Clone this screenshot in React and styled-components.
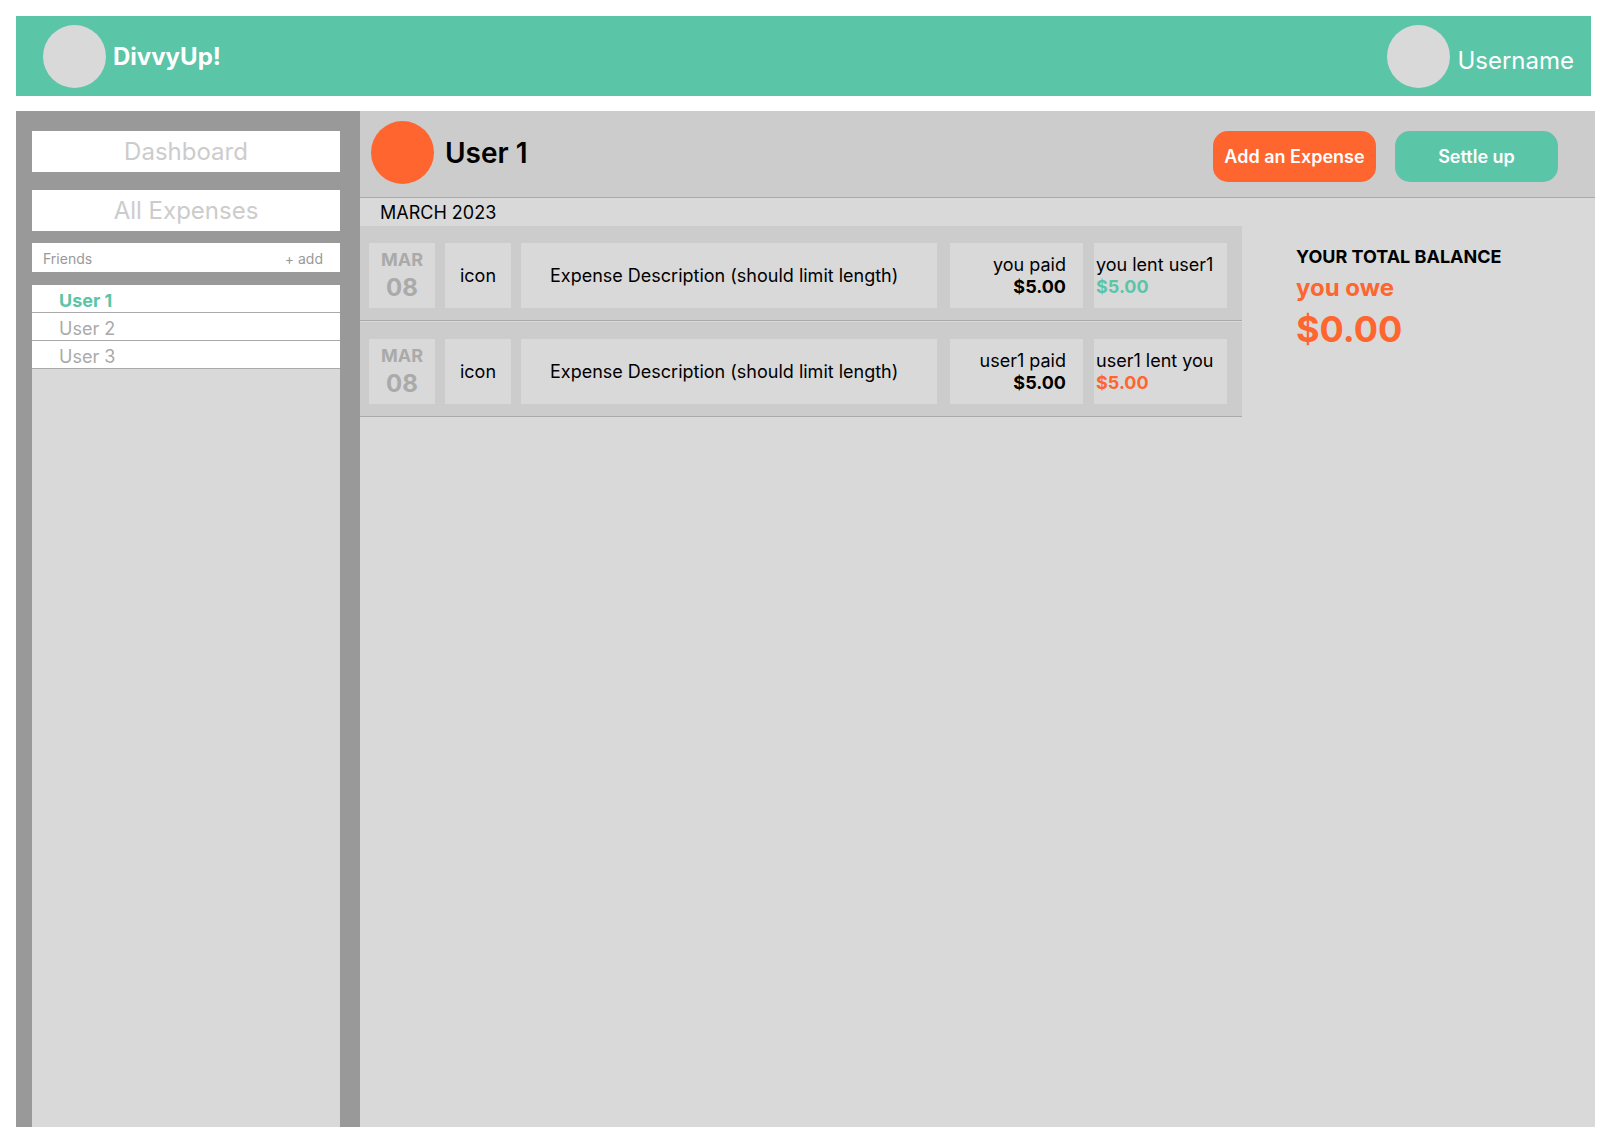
import React from "react";
import styled, { createGlobalStyle, ThemeProvider } from "styled-components";

const theme = {
  green: "#5bc5a7",
  orange: "#ff652f",
  panel: "#d9d9d9",
  band: "#cccccc",
  rail: "#999999",
  muted: "#aaaaaa",
};

const GlobalStyle = createGlobalStyle`
  *, *::before, *::after { box-sizing: border-box; }
  body {
    margin: 0;
    background: #fff;
    color: #000;
    font-family: Inter, "Liberation Sans", sans-serif;
    font-size: 18px;
    line-height: 22px;
  }
  h1, h2, p, ul { margin: 0; padding: 0; }
  ul { list-style: none; }
  a { color: inherit; text-decoration: none; }
  button { border: 0; padding: 0; font: inherit; cursor: pointer; }
`;

const Page = styled.div`
  display: flex;
  flex-direction: column;
  gap: 15px;
  min-height: 100vh;
  padding: 16px 17px 15px 16px;
`;

const Header = styled.header`
  display: flex;
  align-items: center;
  justify-content: space-between;
  height: 80px;
  margin-right: 4px;
  padding: 0 17px 0 27px;
  background: ${({ theme }) => theme.green};
  color: #fff;
`;

const Identity = styled.div`
  display: flex;
  align-items: center;
  gap: ${({ $gap }) => $gap}px;
`;

const Avatar = styled.span`
  flex: none;
  width: 63px;
  height: 63px;
  border-radius: 50%;
  background: ${({ theme, $color }) => theme[$color]};
`;

const Brand = styled.span`
  font-size: 24px;
  line-height: 29px;
  font-weight: 700;
`;

const AccountLink = styled.a`
  padding-top: 8px;
  font-size: 24px;
  line-height: 29px;
  font-weight: 400;
`;

const Body = styled.div`
  display: flex;
  flex: 1;
`;

const Sidebar = styled.aside`
  display: flex;
  flex-direction: column;
  gap: 12px;
  flex: none;
  width: 344px;
  padding: 20px 20px 0 16px;
  background: ${({ theme }) => theme.rail};
`;

const Nav = styled.nav`
  display: flex;
  flex-direction: column;
  gap: 18px;
`;

const NavLink = styled.a`
  display: flex;
  align-items: center;
  justify-content: center;
  height: 41px;
  background: #fff;
  color: ${({ theme }) => theme.band};
  font-size: 24px;
  line-height: 29px;
  font-weight: 400;
`;

const FriendsBar = styled.div`
  display: flex;
  align-items: center;
  justify-content: space-between;
  height: 29px;
  padding: 2px 17px 0 11px;
  background: #fff;
  color: ${({ theme }) => theme.rail};
`;

const FriendsTitle = styled.h2`
  font-size: 14px;
  line-height: 17px;
  font-weight: 400;
`;

const AddFriend = styled.button`
  background: none;
  color: inherit;
  font-size: 14px;
  line-height: 17px;
  font-weight: 400;
`;

const FriendList = styled.ul`
  flex: 1;
  margin-top: 1px;
  background: ${({ theme }) => theme.panel};
`;

const Friend = styled.li`
  height: 28px;
  padding: 5px 27px 0;
  border-bottom: 1px solid ${({ theme }) => theme.muted};
  background: #fff;
  color: ${({ theme, $active }) => ($active ? theme.green : theme.muted)};
  font-weight: ${({ $active }) => ($active ? 700 : 400)};
`;

const Main = styled.main`
  flex: 1;
  min-width: 0;
  background: ${({ theme }) => theme.panel};
`;

const TitleBar = styled.div`
  display: flex;
  align-items: center;
  justify-content: space-between;
  height: 87px;
  padding: 0 37px 4px 11px;
  border-bottom: 1px solid ${({ theme }) => theme.muted};
  background: ${({ theme }) => theme.band};
`;

const Title = styled.h1`
  padding-top: 2px;
  font-size: 28px;
  line-height: 34px;
  font-weight: 600;
`;

const Actions = styled.div`
  display: flex;
  gap: 19px;
  padding-top: 8px;
`;

const ActionButton = styled.button`
  width: 163px;
  height: 51px;
  padding-top: 2px;
  border-radius: 15px;
  background: ${({ theme, $color }) => theme[$color]};
  color: #fff;
  font-weight: 600;
`;

const Columns = styled.div`
  display: flex;
`;

const Ledger = styled.section`
  flex: 1;
  min-width: 0;
`;

const Month = styled.h2`
  padding: 4px 20px 2px;
  font-size: 18px;
  line-height: 22px;
  font-weight: 400;
`;

const ExpenseList = styled.ul`
  display: flex;
  flex-direction: column;
  gap: 1px;
`;

const ExpenseRow = styled.li`
  display: flex;
  gap: 13px;
  padding: 17px 15px 12px 9px;
  border-bottom: 1px solid ${({ theme }) => theme.muted};
  background: ${({ theme }) => theme.band};
`;

const Details = styled.div`
  display: flex;
  flex: 1;
  gap: 10px;
  min-width: 0;
`;

const Amounts = styled.div`
  display: flex;
  gap: 11px;
`;

const Cell = styled.div`
  display: flex;
  flex-direction: column;
  justify-content: center;
  height: 65px;
  background: ${({ theme }) => theme.panel};
`;

const SquareCell = styled(Cell)`
  align-items: center;
  gap: 2px;
  width: 66px;
`;

const DateCell = styled(SquareCell)`
  color: ${({ theme }) => theme.muted};
  font-weight: 700;
`;

const Day = styled.span`
  font-size: 24px;
  line-height: 29px;
`;

const DescriptionCell = styled(Cell)`
  flex: 1;
  min-width: 0;
  padding: 0 20px 0 29px;
`;

const Description = styled.p`
  overflow: hidden;
  text-overflow: ellipsis;
  white-space: nowrap;
`;

const PaidCell = styled(Cell)`
  align-items: flex-end;
  width: 133px;
  padding-right: 17px;
`;

const LentCell = styled(Cell)`
  align-items: flex-start;
  width: 133px;
  padding-left: 2px;
  white-space: nowrap;
`;

const Amount = styled.strong`
  color: ${({ theme, $color }) => ($color ? theme[$color] : "inherit")};
  font-weight: 700;
`;

const Balance = styled.aside`
  display: flex;
  flex-direction: column;
  flex: none;
  gap: 5px;
  width: 353px;
  padding: 48px 54px 0;
  font-weight: 700;
`;

const BalanceTitle = styled.h2`
  font-size: 18px;
  line-height: 22px;
  font-weight: 700;
`;

const BalanceLabel = styled.p`
  color: ${({ theme }) => theme.orange};
  font-size: 24px;
  line-height: 29px;
`;

const BalanceTotal = styled.p`
  color: ${({ theme }) => theme.orange};
  font-size: 36px;
  line-height: 44px;
`;

const friends = ["User 1", "User 2", "User 3"];

const expenses = [
  { id: 1, paid: "you paid", lent: "you lent user1", color: "green" },
  { id: 2, paid: "user1 paid", lent: "user1 lent you", color: "orange" },
];

function Expense({ paid, lent, color }) {
  return (
    <ExpenseRow>
      <Details>
        <DateCell>
          <span>MAR</span>
          <Day>08</Day>
        </DateCell>
        <SquareCell>icon</SquareCell>
        <DescriptionCell>
          <Description>Expense Description (should limit length)</Description>
        </DescriptionCell>
      </Details>
      <Amounts>
        <PaidCell>
          <span>{paid}</span>
          <Amount>$5.00</Amount>
        </PaidCell>
        <LentCell>
          <span>{lent}</span>
          <Amount $color={color}>$5.00</Amount>
        </LentCell>
      </Amounts>
    </ExpenseRow>
  );
}

export default function App() {
  return (
    <ThemeProvider theme={theme}>
      <GlobalStyle />
      <Page>
        <Header>
          <Identity $gap={7}>
            <Avatar $color="panel" />
            <Brand>DivvyUp!</Brand>
          </Identity>
          <Identity $gap={7}>
            <Avatar $color="panel" />
            <AccountLink href="#account">Username</AccountLink>
          </Identity>
        </Header>
        <Body>
          <Sidebar>
            <Nav>
              <NavLink href="#dashboard">Dashboard</NavLink>
              <NavLink href="#expenses">All Expenses</NavLink>
            </Nav>
            <FriendsBar>
              <FriendsTitle>Friends</FriendsTitle>
              <AddFriend type="button">+ add</AddFriend>
            </FriendsBar>
            <FriendList>
              {friends.map((name, i) => (
                <Friend key={name} $active={i === 0}>
                  <a href={`#friend-${i + 1}`}>{name}</a>
                </Friend>
              ))}
            </FriendList>
          </Sidebar>
          <Main>
            <TitleBar>
              <Identity $gap={11}>
                <Avatar $color="orange" />
                <Title>User 1</Title>
              </Identity>
              <Actions>
                <ActionButton type="button" $color="orange">Add an Expense</ActionButton>
                <ActionButton type="button" $color="green">Settle up</ActionButton>
              </Actions>
            </TitleBar>
            <Columns>
              <Ledger>
                <Month>MARCH 2023</Month>
                <ExpenseList>
                  {expenses.map((expense) => (
                    <Expense key={expense.id} {...expense} />
                  ))}
                </ExpenseList>
              </Ledger>
              <Balance>
                <BalanceTitle>YOUR TOTAL BALANCE</BalanceTitle>
                <BalanceLabel>you owe</BalanceLabel>
                <BalanceTotal>$0.00</BalanceTotal>
              </Balance>
            </Columns>
          </Main>
        </Body>
      </Page>
    </ThemeProvider>
  );
}
